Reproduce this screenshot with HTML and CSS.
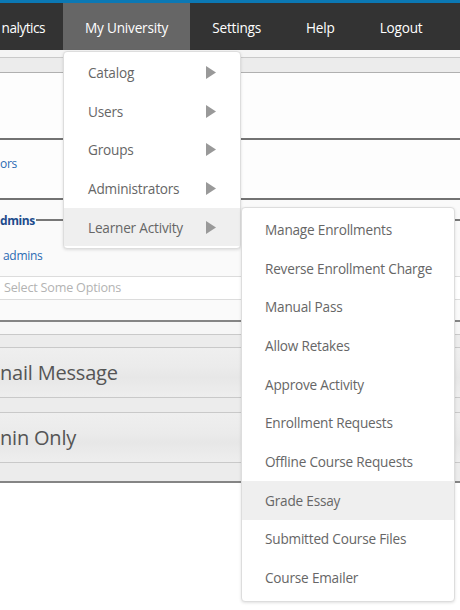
FILE: index.html
```html
<!DOCTYPE html>
<html lang="en">
<head>
<meta charset="utf-8">
<title>My University</title>
<link rel="stylesheet" href="styles.css">
</head>
<body>
<div class="topline"></div>
<nav class="nav">
  <a class="tab tab-first">nalytics</a>
  <a class="tab active">My University</a>
  <a class="tab">Settings</a>
  <a class="tab">Help</a>
  <a class="tab">Logout</a>
</nav>
<main class="content">
  <div class="band band-a"></div>
  <div class="band band-b"></div>
  <section class="sec sec-top"></section>
  <section class="sec sec-link"><a class="link link-instructors">ors</a></section>
  <section class="admins">
    <div class="legend-row"><span class="legend">dmins</span><span class="legend-line"></span></div>
    <a class="link link-admins">admins</a>
    <div class="chosen">Select Some Options</div>
  </section>
  <div class="band b1"></div>
  <div class="band b2"></div>
  <div class="panel"><h2 class="panel-title">nail Message</h2></div>
  <div class="band b3"></div>
  <div class="panel"><h2 class="panel-title">nin Only</h2></div>
  <div class="band b4"></div>
</main>

<ul class="dropdown">
  <li class="dd-item">Catalog<svg class="caret" viewBox="0 0 10 13"><polygon points="0,0 10,6.5 0,13"/></svg></li>
  <li class="dd-item">Users<svg class="caret" viewBox="0 0 10 13"><polygon points="0,0 10,6.5 0,13"/></svg></li>
  <li class="dd-item">Groups<svg class="caret" viewBox="0 0 10 13"><polygon points="0,0 10,6.5 0,13"/></svg></li>
  <li class="dd-item">Administrators<svg class="caret" viewBox="0 0 10 13"><polygon points="0,0 10,6.5 0,13"/></svg></li>
  <li class="dd-item hover">Learner Activity<svg class="caret" viewBox="0 0 10 13"><polygon points="0,0 10,6.5 0,13"/></svg></li>
</ul>

<ul class="submenu">
  <li class="sm-item">Manage Enrollments</li>
  <li class="sm-item">Reverse Enrollment Charge</li>
  <li class="sm-item">Manual Pass</li>
  <li class="sm-item">Allow Retakes</li>
  <li class="sm-item">Approve Activity</li>
  <li class="sm-item">Enrollment Requests</li>
  <li class="sm-item">Offline Course Requests</li>
  <li class="sm-item hover">Grade Essay</li>
  <li class="sm-item">Submitted Course Files</li>
  <li class="sm-item">Course Emailer</li>
</ul>
</body>
</html>
```

FILE: styles.css
```css
* { box-sizing: border-box; }
html, body { margin: 0; padding: 0; }
body {
  width: 460px;
  height: 610px;
  overflow: hidden;
  background: #ffffff;
  font-family: "Open Sans", "Noto Sans", "DejaVu Sans", sans-serif;
  position: relative;
}

.topline { height: 3px; background: #0b78b4; }

.nav {
  height: 47px;
  background: #333333;
  display: flex;
  white-space: nowrap;
}
.tab {
  display: block;
  padding: 2px 22.5px 0;
  line-height: 45px;
  font-size: 13.6px;
  letter-spacing: -0.2px;
  color: #ffffff;
  flex: none;
}
.tab-first { width: 63px; display: flex; justify-content: flex-end; padding: 2px 18px 0 0; letter-spacing: -0.5px; }
.tab.active { background: #666666; padding: 2px 21.5px 0 22px; }

.content { width: 460px; }
.band { background: #ececec; border-bottom: 1px solid #c9c9c9; }
.band-a { height: 8px; background: #f4f4f4; }
.band-b { height: 15px; border-bottom-color: #b0b0b0; }
.sec { background: #fdfdfd; border-bottom: 2px solid #727272; }
.sec-top { height: 67px; }
.sec-link { height: 60px; display: flex; align-items: center; }

.link { color: #2a6bb3; font-size: 12px; letter-spacing: -0.3px; white-space: nowrap; }
.link-instructors { margin-top: -12px; }

.admins {
  height: 122px;
  background: #fafafa;
  border-bottom: 2px solid #858585;
  padding-top: 11px;
}
.legend-row { display: flex; align-items: center; height: 18px; }
.legend { color: #1d4c8c; font-weight: bold; font-size: 12px; letter-spacing: -0.4px; padding-right: 1px; }
.legend-line { flex: 1; border-top: 2px solid #777777; }
.link-admins { display: block; margin-top: 18px; margin-left: 3px; line-height: 18px; }
.chosen {
  margin-top: 11px;
  width: 460px;
  height: 24px;
  border-top: 1px solid #dcdcdc;
  border-bottom: 1px solid #dcdcdc;
  background: #ffffff;
  color: #b3b3b3;
  font-size: 12.6px;
  letter-spacing: -0.2px;
  line-height: 22px;
  padding-left: 4px;
}

.b1 { height: 13px; background: #f6f6f6; }
.b2 { height: 13px; }
.b3 { height: 15px; }
.b4 { height: 20px; border-bottom: 2px solid #858585; }
.panel {
  height: 50px;
  border-bottom: 1px solid #c9c9c9;
  background: linear-gradient(#efefef 0%, #ebebeb 40%, #e7e7e7 60%, #eeeeee 100%);
  display: flex;
  align-items: center;
  overflow: hidden;
}
.panel-title { margin: 0; font-weight: normal; font-size: 20px; letter-spacing: -0.2px; color: #555555; white-space: nowrap; }

.dropdown, .submenu {
  position: absolute;
  margin: 0;
  list-style: none;
  background: #ffffff;
  border: 1px solid #dddddd;
  border-radius: 4px;
  box-shadow: 0 1px 3px rgba(0,0,0,0.12);
  font-size: 13.6px;
  letter-spacing: -0.2px;
  color: #666666;
}
.dropdown { left: 63px; top: 51px; width: 178px; padding: 1px 0 2px; }
.dd-item {
  height: 38.7px;
  display: flex;
  align-items: center;
  justify-content: space-between;
  padding: 0 24px 0 24px;
}
.caret { width: 10px; height: 13px; fill: #999999; }
.hover { background: #efefef; }

.submenu { left: 241px; top: 207px; width: 214px; padding: 2px 0 4px; }
.sm-item { height: 38.7px; display: flex; align-items: center; padding-left: 23px; }
```
